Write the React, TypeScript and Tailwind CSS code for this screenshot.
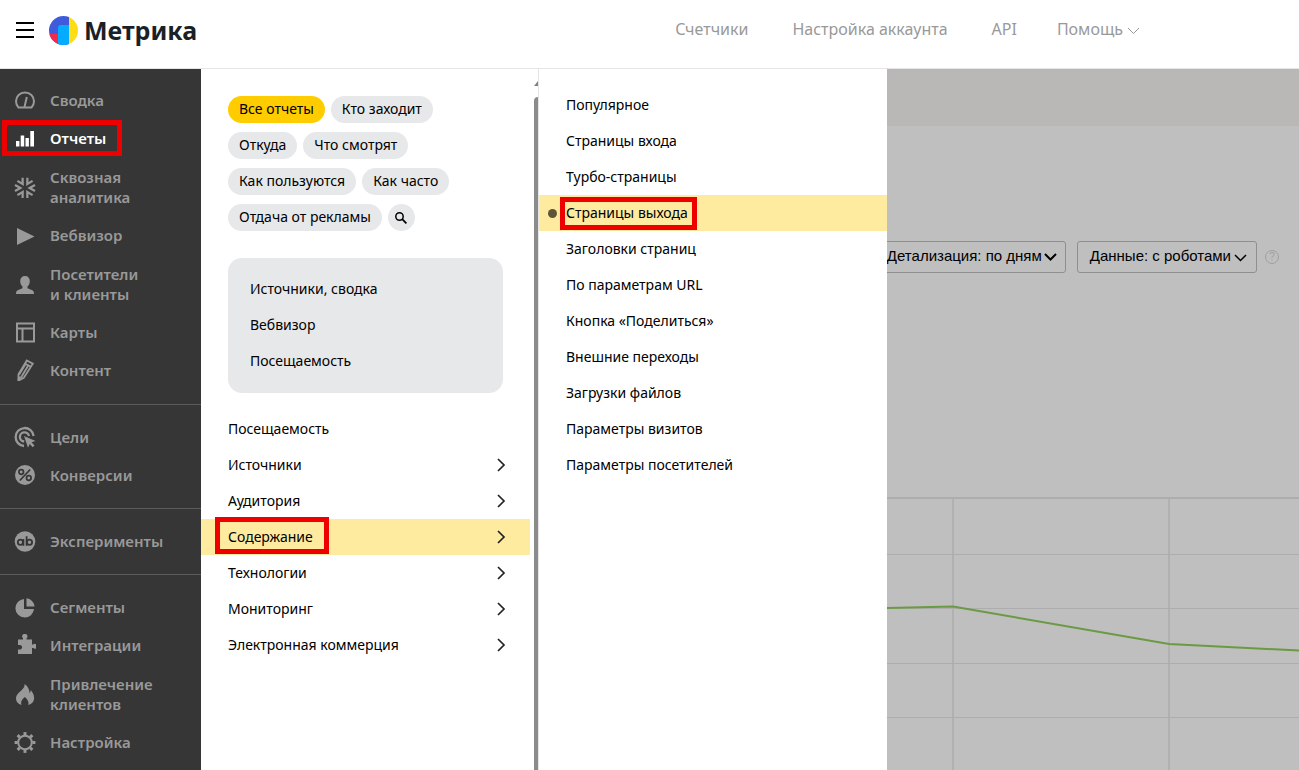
import { ReactNode, useState } from 'react';

interface SideItem { label: string; second?: string; icon: ReactNode; }

const line = { fill: 'none', stroke: 'currentColor', strokeWidth: 2 };

const icons = {
  gauge: (
    <g {...line}>
      <path d="M4.5 18.5h13a9 9 0 0 0 2.5-6.2C20 7 16 3.5 11 3.5S2 7 2 12.3a9 9 0 0 0 2.5 6.2z" />
      <path d="M12.8 8l-2.3 10" />
    </g>
  ),
  bars: <path fill="currentColor" d="M2 14h3.4v5.5H2zM6.700 8.500h3.500v11H6.700zM11.500 11h3.400v8.500h-3.400zM16.300 4H20v15.500h-3.700z" />,
  spark: (
    <g {...line} strokeWidth={2.2}>
      {[0, 60, 120, 180, 240, 300].map((a) => (
        <path key={a} d="M1 8l5.400 3L1 14" transform={`translate(0 1) rotate(${a} 11 11)`} />
      ))}
    </g>
  ),
  play: <path fill="currentColor" d="M3 4l17.500 8.500L3 21z" />,
  person: <path fill="currentColor" d="M11 3c-3 0-4.800 2-4.800 5 0 2.500.9 4.400 2.300 5.500v1.800L4.300 17C2.700 17.700 2 18.600 2 21h18c0-2.400-.7-3.300-2.300-4l-4.200-1.700v-1.800c1.400-1.100 2.300-3 2.300-5.500 0-3-1.800-5-4.800-5z" />,
  layout: <path {...line} d="M3 2.500h17v18H3zM3 7.500h17M8.500 7.500v13" />,
  pencil: (
    <g {...line} strokeWidth={1.8}>
      <path d="M12.800 1.500l6 3.200-9 14-5.500 3 .2-6.500z" />
      <path d="M11.400 4.700l5.600 3M14.400 6.200L6.900 18.800M11.700 4.900L5.200 15.500" />
      <path d="M4.600 18.500l1.900 1.200" strokeWidth={3} />
    </g>
  ),
  target: (
    <g>
      <path {...line} strokeWidth={2.300} d="M10 20a9 9 0 1 1 9.600-10M10.200 15.500a4.600 4.600 0 1 1 4.800-5.500" />
      <path fill="currentColor" d="M10 10l11.500 5-4 1.300 3 3.200-1.800 1.800-3-3.200-1.700 3.600z" />
    </g>
  ),
  percent: (
    <g>
      <circle cx="11" cy="11" r="10" fill="currentColor" />
      <g fill="none" stroke="#363636" strokeWidth="1.700">
        <circle cx="7.200" cy="8" r="2.300" />
        <circle cx="14.800" cy="14" r="2.300" />
        <path d="M16.200 5.500l-10.400 11" />
      </g>
    </g>
  ),
  ab: (
    <g>
      <circle cx="11" cy="11.500" r="10.300" fill="currentColor" />
      <g fill="none" stroke="#363636" strokeWidth="1.800">
        <circle cx="6.400" cy="12.300" r="2.600" />
        <path d="M9.400 9v6.700M12.600 6.300v9.400" />
        <circle cx="15.500" cy="12.300" r="2.600" />
      </g>
    </g>
  ),
  pie: <path fill="currentColor" d="M10 3a9.300 9.300 0 1 0 10 10H10zM12.500 2.300V10.500h8a8.800 8.800 0 0 0-8-8.200z" />,
  puzzle: <path fill="currentColor" d="M4 5.500h5V4.200a2.600 2.600 0 1 1 3.600 0v1.300h5.400v5h1.200a2.400 2.400 0 1 1 0 3.600H18V20H4v-4.500h1.300a2.300 2.300 0 1 0 0-4.500H4z" />,
  flame: <path fill="currentColor" d="M10.500 1c.5 3-1.200 4.300-3.300 6.500C4.500 10 2 12 2 15.500c0 3 2 5.600 5.500 6.500-1.200-3.800 1-6 3.400-8 2 2 4.500 4.500 3.300 8 3.800-1 5.900-3.600 5.900-7 0-3.500-1.600-6-3.600-8 .2 1.300 0 2.400-.8 3.200C15.500 7 14 3 10.500 1z" />,
  gear: (
    <g {...line}>
      <circle cx="11" cy="11.500" r="6.800" />
      {[0, 45, 90, 135, 180, 225, 270, 315].map((a) => (
        <path key={a} d="M11 1.100v3" strokeWidth={3} transform={`rotate(${a} 11 11.5)`} />
      ))}
    </g>
  ),
};

const groups: SideItem[][] = [
  [
    { label: 'Сводка', icon: icons.gauge },
    { label: 'Отчеты', icon: icons.bars },
    { label: 'Сквозная', second: 'аналитика', icon: icons.spark },
    { label: 'Вебвизор', icon: icons.play },
    { label: 'Посетители', second: 'и клиенты', icon: icons.person },
    { label: 'Карты', icon: icons.layout },
    { label: 'Контент', icon: icons.pencil },
  ],
  [
    { label: 'Цели', icon: icons.target },
    { label: 'Конверсии', icon: icons.percent },
  ],
  [{ label: 'Эксперименты', icon: icons.ab }],
  [
    { label: 'Сегменты', icon: icons.pie },
    { label: 'Интеграции', icon: icons.puzzle },
    { label: 'Привлечение', second: 'клиентов', icon: icons.flame },
    { label: 'Настройка', icon: icons.gear },
  ],
];

const tagRows = [['Все отчеты', 'Кто заходит'], ['Откуда', 'Что смотрят'], ['Как пользуются', 'Как часто'], ['Отдача от рекламы']];
const favourites = ['Источники, сводка', 'Вебвизор', 'Посещаемость'];
const sections = ['Посещаемость', 'Источники', 'Аудитория', 'Содержание', 'Технологии', 'Мониторинг', 'Электронная коммерция'];
const pages = [
  'Популярное', 'Страницы входа', 'Турбо-страницы', 'Страницы выхода', 'Заголовки страниц', 'По параметрам URL',
  'Кнопка «Поделиться»', 'Внешние переходы', 'Загрузки файлов', 'Параметры визитов', 'Параметры посетителей',
];

function Caret({ weight }: { weight: number }) {
  return (
    <svg className="w-[13px] h-2 shrink-0" viewBox="0 0 13 8" fill="none" stroke="currentColor" strokeWidth={weight}>
      <path d="M1 1l5.500 5.500L12 1" />
    </svg>
  );
}

function Header() {
  return (
    <header className="flex items-center h-[69px] pb-2 border-b border-[#e5e5e5] bg-white">
      <button aria-label="Меню" className="ml-4 flex flex-col gap-[5px]">
        <span className="block w-[18px] h-[2px] bg-black" />
        <span className="block w-[18px] h-[2px] bg-black" />
        <span className="block w-[18px] h-[2px] bg-black" />
      </button>
      <a href="#" className="ml-[15px] flex items-center gap-[6px]">
        <svg className="w-[29px] h-[29px]" viewBox="0 0 29 29">
          <clipPath id="logo"><circle cx="14.500" cy="14.500" r="14.500" /></clipPath>
          <g clipPath="url(#logo)">
            <path fill="#3f5bdb" d="M0 0h20v29H0z" />
            <path fill="#f5294a" d="M0 18h9v11H0z" />
            <path fill="#04acff" d="M9 12a3 3 0 0 1 3-3h8v20H9z" />
            <path fill="#ffdc14" d="M20 0h9v29h-9z" />
          </g>
        </svg>
        <span className="text-[25px] leading-8 font-bold text-[#1b1f27]">Метрика</span>
      </a>
      <nav className="ml-auto mr-[159px] pb-[2px] flex items-center text-base text-[#999]">
        <a href="#" className="mr-11">Счетчики</a>
        <a href="#" className="mr-11">Настройка аккаунта</a>
        <a href="#" className="mr-10">API</a>
        <button className="flex items-center gap-1">Помощь<span className="mt-1"><Caret weight={1} /></span></button>
      </nav>
    </header>
  );
}

function Sidebar() {
  return (
    <nav className="w-[201px] shrink-0 bg-[#363636] text-[#999] text-[15px] leading-5 font-semibold">
      {groups.map((group, i) => (
        <div key={i} className={i === 0 ? 'pt-3 pb-[15px]' : 'border-t border-[#5c5c5c] pt-[13px] pb-[14px] last:pb-0'}>
          {group.map((item) => {
            const active = item.label === 'Отчеты';
            return (
              <a key={item.label} href="#"
                className={`relative flex items-center gap-[14px] pl-[14px] ${item.second ? 'h-[59px]' : 'h-[38px]'} ${active ? 'text-white' : ''}`}>
                <svg className="w-[22px] h-[22px] shrink-0" viewBox="0 0 22 22">{item.icon}</svg>
                <span>{item.label}{item.second && <><br />{item.second}</>}</span>
                {active && <span className="absolute left-[2px] inset-y-[1px] w-[120px] border-[5px] border-[#ee0000]" />}
              </a>
            );
          })}
        </div>
      ))}
    </nav>
  );
}

function ReportsPanel() {
  const [tag, setTag] = useState('Все отчеты');
  return (
    <div className="w-[338px] shrink-0 flex border-r border-[#e5e5e5] bg-white">
      <div className="w-[329px] pt-[27px]">
        <div className="pl-[27px] flex flex-col gap-[9px]">
          {tagRows.map((row, i) => (
            <div key={i} className="flex gap-[6px]">
              {row.map((name) => (
                <button key={name} onClick={() => setTag(name)}
                  className={`h-[27px] px-[11px] pb-[2px] rounded-full ${tag === name ? 'bg-[#ffcc00]' : 'bg-[#e7e8ea]'}`}>
                  {name}
                </button>
              ))}
              {i === 3 && (
                <button aria-label="Поиск" className="w-[27px] h-[27px] rounded-full bg-[#e7e8ea] flex items-center justify-center">
                  <svg className="w-3 h-3" viewBox="0 0 12 12" fill="none" stroke="black">
                    <circle cx="4.500" cy="4.500" r="3.700" strokeWidth="1.500" />
                    <path d="M7.200 7.200l4.200 4.200" strokeWidth="1.800" />
                  </svg>
                </button>
              )}
            </div>
          ))}
        </div>
        <ul className="mt-[27px] ml-[27px] mr-[27px] pt-[13px] pb-[14px] pl-[22px] rounded-[14px] bg-[#e7e8ea]">
          {favourites.map((name) => (
            <li key={name}><a href="#" className="flex items-center h-9">{name}</a></li>
          ))}
        </ul>
        <ul className="mt-[18px]">
          {sections.map((name, i) => {
            const active = name === 'Содержание';
            return (
              <li key={name}>
                <a href="#" className={`flex items-center justify-between h-9 pl-[27px] pr-6 ${active ? 'bg-[#ffeba0]' : ''}`}>
                  <span className="relative">
                    {name}
                    {active && <span className="absolute -left-[13px] -right-4 -top-[10px] -bottom-[7px] border-[5px] border-[#ee0000]" />}
                  </span>
                  {i > 0 && (
                    <svg className="w-[9px] h-[14px]" viewBox="0 0 9 14" fill="none" stroke="#222" strokeWidth="1.700">
                      <path d="M1 1l6 6-6 6" />
                    </svg>
                  )}
                </a>
              </li>
            );
          })}
        </ul>
      </div>
      <div className="ml-1 w-1 flex flex-col">
        <svg className="w-1 h-[28px]" viewBox="0 0 4 28"><path fill="#808080" d="M4 12v5H0z" /></svg>
        <div className="flex-1 rounded-tl bg-[#8b8b8b]" />
      </div>
    </div>
  );
}

function PagesPanel() {
  return (
    <ul className="w-[348px] shrink-0 pt-[18px] bg-white">
      {pages.map((name) => {
        const active = name === 'Страницы выхода';
        return (
          <li key={name}>
            <a href="#" className={`flex items-center h-9 ${active ? 'bg-[#ffeba0]' : ''}`}>
              <span className={`mx-[9px] w-[9px] h-[9px] rounded-full ${active ? 'bg-[#5f5638]' : ''}`} />
              <span className="relative">
                {name}
                {active && <span className="absolute -left-[6px] -right-[9px] -top-[6px] -bottom-[7px] border-[5px] border-[#ee0000]" />}
              </span>
            </a>
          </li>
        );
      })}
    </ul>
  );
}

function Dashboard() {
  return (
    <main className="flex-1 min-w-0 flex flex-col overflow-hidden bg-[#bfbfbf]">
      <div className="h-[57px] bg-[#b9b8b6]" />
      <div className="mt-[115px] pr-5 flex items-center justify-end font-['Liberation_Sans',sans-serif] text-[15px]">
        <button className="shrink-0 h-8 pl-3 pr-2 pb-[2px] flex items-center gap-[2px] border border-[#8f8f8f] rounded-[3px]">
          Детализация: по дням<span className="flex mt-[2px]"><Caret weight={2} /></span>
        </button>
        <button className="shrink-0 ml-[11px] h-8 pl-3 pr-[9px] pb-[2px] flex items-center gap-[3px] border border-[#8f8f8f] rounded-[3px]">
          Данные: с роботами<span className="flex mt-1"><Caret weight={1.5} /></span>
        </button>
        <button className="shrink-0 ml-2 w-[14px] h-[14px] rounded-full border border-[#a0a0a0] text-[#a0a0a0] text-[10px] leading-3">?</button>
      </div>
      <svg className="mt-[224px] w-full h-[273px]" viewBox="0 0 412 273" preserveAspectRatio="xMinYMin slice" fill="none">
        <path stroke="#adadad" strokeWidth="2" d="M0 1h412" />
        <path stroke="#b1b1b1" strokeWidth="2" d="M66 2v271M282 2v271" />
        <path stroke="#adadad" d="M0 57.500h412M0 111.500h412M0 166.500h412M0 220.500h412" />
        <path stroke="#6b9a45" strokeWidth="2" d="M0 111l66-1.500 216 37.500 130 6.500" />
      </svg>
    </main>
  );
}

export default function App() {
  return (
    <div className="min-h-screen flex flex-col font-['Noto_Sans',sans-serif] text-sm text-black">
      <Header />
      <div className="flex-1 flex">
        <Sidebar />
        <ReportsPanel />
        <PagesPanel />
        <Dashboard />
      </div>
    </div>
  );
}
